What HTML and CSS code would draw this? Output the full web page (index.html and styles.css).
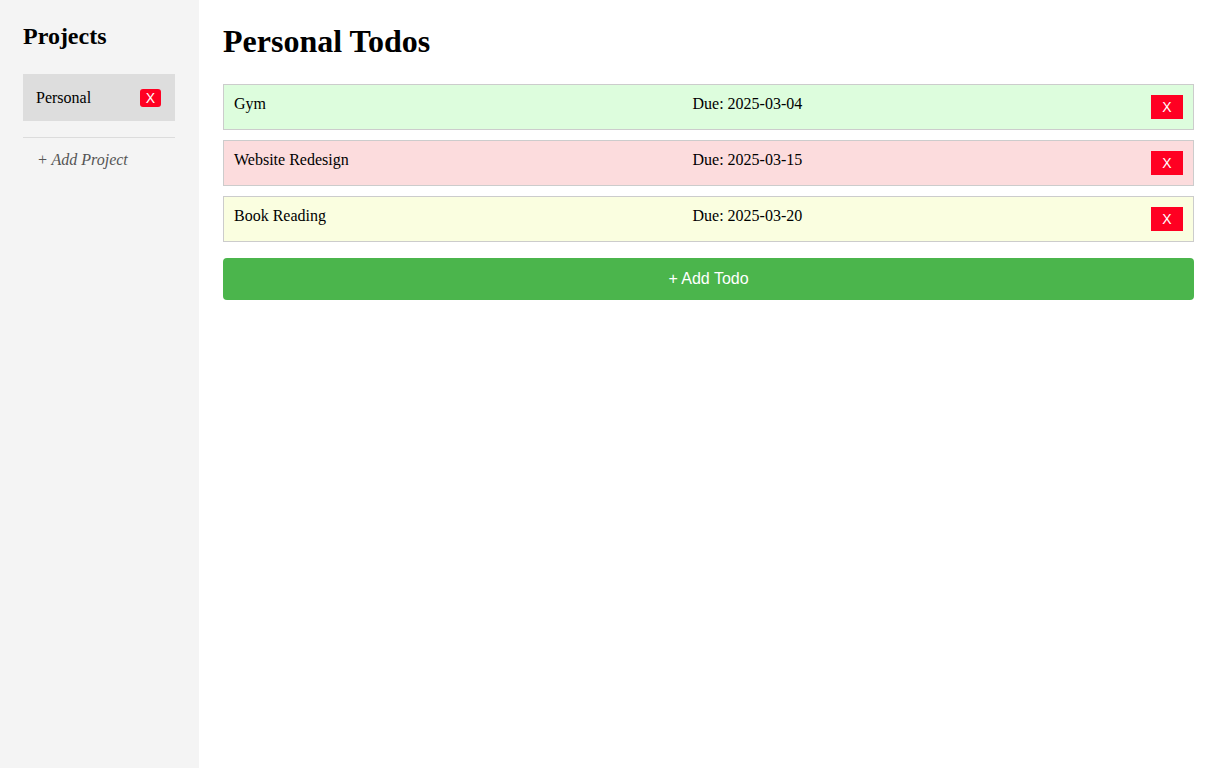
FILE: index.html
```html
<!DOCTYPE html>
<html>
<head>
<meta charset="utf-8">
<link rel="stylesheet" href="styles.css">
</head>
<body>
<div class="app">
  <aside class="sidebar">
    <h2 class="sidebar-title">Projects</h2>
    <div class="project-item">
      <span class="project-name">Personal</span>
      <button class="project-delete">X</button>
    </div>
    <hr class="divider">
    <div class="add-project">+ Add Project</div>
  </aside>
  <main class="main">
    <h1 class="main-title">Personal Todos</h1>
    <div class="todo todo-green">
      <span class="todo-title">Gym</span>
      <span class="todo-due">Due: 2025-03-04</span>
      <button class="todo-delete">X</button>
    </div>
    <div class="todo todo-red">
      <span class="todo-title">Website Redesign</span>
      <span class="todo-due">Due: 2025-03-15</span>
      <button class="todo-delete">X</button>
    </div>
    <div class="todo todo-yellow">
      <span class="todo-title">Book Reading</span>
      <span class="todo-due">Due: 2025-03-20</span>
      <button class="todo-delete">X</button>
    </div>
    <button class="add-todo">+ Add Todo</button>
  </main>
</div>
</body>
</html>
```

FILE: styles.css
```css
html, body {
  margin: 0;
  padding: 0;
  height: 100%;
}
body {
  font-family: "Liberation Serif", "Times New Roman", serif;
  color: #000;
  background: #fff;
}
.app {
  display: flex;
  min-height: 100vh;
}
.sidebar {
  width: 199px;
  box-sizing: border-box;
  background: #f4f4f4;
  padding: 23px 24px 0 23px;
  flex-shrink: 0;
}
.sidebar-title {
  font-size: 24px;
  font-weight: bold;
  margin: 0 0 24px;
}
.project-item {
  display: flex;
  align-items: center;
  justify-content: space-between;
  height: 47px;
  background: #dddddd;
  padding: 0 14px 0 13px;
  font-size: 16px;
}
.project-delete {
  font-family: "Liberation Sans", Arial, sans-serif;
  font-size: 14px;
  color: #fff;
  background: #ff0022;
  border: none;
  border-radius: 3px;
  width: 21px;
  height: 18px;
  padding: 0;
  line-height: 18px;
}
.divider {
  border: none;
  border-top: 1px solid #dcdcdc;
  margin: 16px 0 0;
  height: 0;
}
.add-project {
  font-style: italic;
  font-size: 16px;
  color: #555;
  padding: 13px 0 0 14px;
}
.main {
  flex: 1;
  padding: 23px 23px 0 24px;
}
.main-title {
  font-size: 32px;
  font-weight: bold;
  margin: 0 0 24px;
}
.todo {
  display: flex;
  border: 1px solid #cccccc;
  padding: 10px;
  margin-bottom: 10px;
  font-size: 16px;
}
.todo-green { background: #ddfddd; }
.todo-red { background: #fcdcdd; }
.todo-yellow { background: #fafee0; }
.todo-title, .todo-due {
  flex: 1;
  line-height: 18px;
}
.todo-delete {
  font-family: "Liberation Sans", Arial, sans-serif;
  font-size: 14px;
  color: #fff;
  background: #ff0022;
  border: none;
  width: 32px;
  height: 24px;
  padding: 0;
}
.add-todo {
  display: block;
  width: 100%;
  margin-top: 16px;
  height: 42px;
  background: #4bb54c;
  color: #fff;
  border: none;
  border-radius: 4px;
  font-family: "Liberation Sans", Arial, sans-serif;
  font-size: 16px;
}
```
